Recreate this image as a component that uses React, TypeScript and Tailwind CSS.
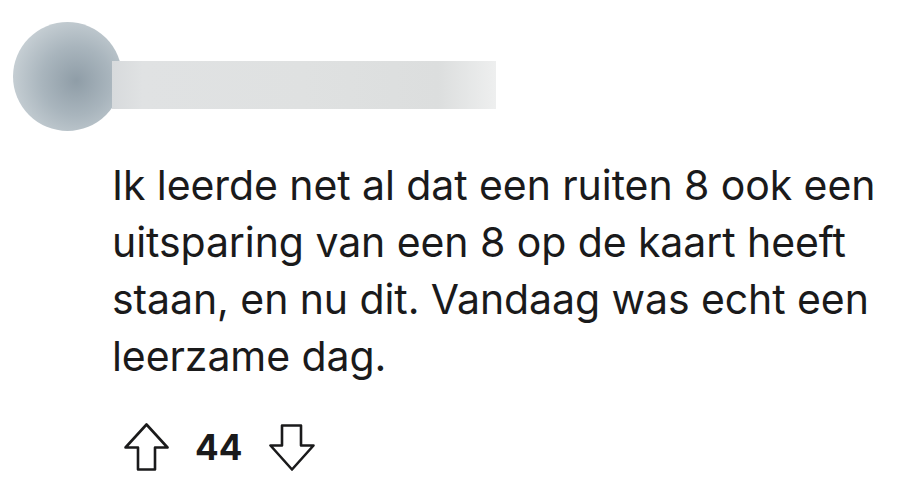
export default function App() {
  return (
    <div className="w-[902px] h-[502px] bg-white overflow-hidden relative font-['Inter','Noto_Sans',sans-serif] text-[#1a1a1b]">
      {/* header (blurred out user) */}
      <div className="flex items-start pt-[22px] pl-[13px]">
        <div className="w-[109px] h-[109px] rounded-full shrink-0 bg-[radial-gradient(circle_at_58%_54%,#8f9da7_0%,#a9b5bd_40%,#dbe1e4_100%)]" />
        <div className="-ml-[10px] mt-[39px] w-[384px] h-[48px] bg-[linear-gradient(90deg,#d7dadc_0%,#e0e2e3_8%,#dfe1e1_50%,#dcdede_85%,#eeefef_100%)]" />
      </div>

      <p className="pl-[112px] pr-[20px] mt-[26px] text-[41px] leading-[57px] tracking-[-0.08px]">
        Ik leerde net al dat een ruiten 8 ook een uitsparing van een 8 op de kaart heeft staan, en nu dit. Vandaag was echt een leerzame dag.
      </p>

      <div className="flex items-center pl-[124px] mt-[38px]">
        <svg width="45" height="48" viewBox="0 0 45 48" fill="none" stroke="#1a1a1b" strokeWidth="2.6" strokeLinejoin="round">
          <path d="M22.5 1.5 L43.5 24.5 L31 24.5 L31 46.5 L14 46.5 L14 24.5 L1.5 24.5 Z" />
        </svg>
        <span className="ml-[26px] text-[35px] font-bold leading-none">44</span>
        <svg className="ml-[27px]" width="46" height="47" viewBox="0 0 46 47" fill="none" stroke="#1a1a1b" strokeWidth="2.6" strokeLinejoin="round">
          <path d="M13 1.5 L32 1.5 L32 21.5 L44.5 21.5 L23 45.5 L1.5 21.5 L13 21.5 Z" />
        </svg>
      </div>
    </div>
  );
}
